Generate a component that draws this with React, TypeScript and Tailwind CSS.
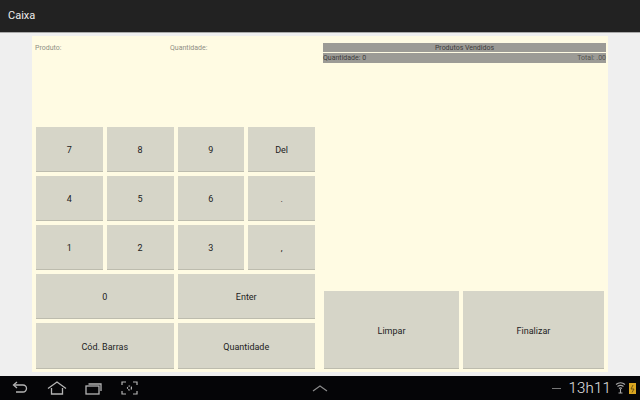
const font = { fontFamily: 'Roboto, sans-serif' };

function Key({ label, className = '' }: { label: string; className?: string }) {
  return (
    <div
      className={`flex items-center justify-center pt-[4px] bg-[#d6d5c8] border-b border-[#bdbcae] text-[9px] text-[#222] ${className}`}
    >
      {label}
    </div>
  );
}

function NavIcons() {
  return (
    <div className="flex items-center gap-[18px] pl-[11px] text-[#b4b4b4]">
      <svg width="18" height="14" viewBox="0 0 18 14" fill="none" stroke="currentColor" strokeWidth="1.3">
        <path d="M6 1 2.500 4 6 7" />
        <path d="M3 4h9a3.500 3.500 0 0 1 0 7H5" />
      </svg>
      <svg width="20" height="14" viewBox="0 0 20 14" fill="none" stroke="currentColor" strokeWidth="1.3">
        <path d="M1 7.500 10 1l9 6.500" />
        <path d="M4.500 7v6h11V7" />
      </svg>
      <svg width="18" height="13" viewBox="0 0 18 13" fill="none" stroke="currentColor" strokeWidth="1.3">
        <rect x="1" y="4" width="13" height="8" />
        <path d="M3.500 2h12.500v7" />
      </svg>
      <svg width="17" height="14" viewBox="0 0 17 14" fill="none" stroke="currentColor" strokeWidth="1.2">
        <path d="M1 4V1h4M12 1h4v3M16 10v3h-4M5 13H1v-3" />
        <circle cx="8.500" cy="7" r="2" strokeDasharray="1.500 1" />
      </svg>
    </div>
  );
}

function StatusIcons() {
  return (
    <div className="flex items-center gap-[3px]">
      <svg width="11" height="12" viewBox="0 0 11 12" fill="none" stroke="#a8a8a8" strokeWidth="1.1">
        <path d="M1 2.500a7 7 0 0 1 9 0M2.500 4.500a5 5 0 0 1 6 0M4 6.500a2.500 2.500 0 0 1 3 0" />
        <path d="M5.500 7v4M3.500 11h4" />
      </svg>
      <svg width="7" height="11" viewBox="0 0 7 11">
        <rect width="7" height="11" fill="#d9a520" />
        <path d="M4 2 2 6h3l-2 3.500" stroke="#5a4510" strokeWidth="0.8" fill="none" />
      </svg>
    </div>
  );
}

export default function App() {
  return (
    <div className="w-[640px] h-[400px] flex flex-col bg-[#efefef] overflow-hidden" style={font}>
      <div className="h-[33px] shrink-0 flex items-center pl-[8px] bg-[#222222] border-b border-[#a9a9a9] text-[11px] text-[#eeeeee]">
        Caixa
      </div>

      <div className="flex-1 min-h-0 pl-[32px] pr-[32px] pt-[3px] pb-[4px]">
        <div className="h-full flex bg-[#fffbe3]">
          <div className="w-[286px] shrink-0 flex flex-col pl-[4px] pt-[8px] pb-[3px]">
            <div className="flex-1 flex -ml-[1px] text-[7px] leading-[8px] text-[#8f8f85]">
              <span className="w-[135px]">Produto:</span>
              <span>Quantidade:</span>
            </div>
            <div className="flex flex-col gap-[4px] w-[279px]">
              <div className="grid grid-cols-4 gap-[4px] h-[45px]">
                <Key label="7" />
                <Key label="8" />
                <Key label="9" />
                <Key label="Del" />
              </div>
              <div className="grid grid-cols-4 gap-[4px] h-[45px]">
                <Key label="4" />
                <Key label="5" />
                <Key label="6" />
                <Key label="." />
              </div>
              <div className="grid grid-cols-4 gap-[4px] h-[45px]">
                <Key label="1" />
                <Key label="2" />
                <Key label="3" />
                <Key label="," />
              </div>
              <div className="grid grid-cols-2 gap-[4px] h-[45px]">
                <Key label="0" />
                <Key label="Enter" />
              </div>
              <div className="grid grid-cols-2 gap-[4px] h-[46px]">
                <Key label="Cód. Barras" />
                <Key label="Quantidade" />
              </div>
            </div>
          </div>

          <div className="flex-1 min-w-0 flex flex-col pl-[5px] pr-[2px] pt-[7px] pb-[3px]">
            <div className="flex-1 text-[7px] leading-[10px] text-[#3c3c3c]">
              <div className="bg-[#9c9b96] text-center h-[9px] mb-px">Produtos Vendidos</div>
              <div className="bg-[#9c9b96] flex justify-between h-[10px]">
                <span>Quantidade: 0</span>
                <span className="text-[#55554f]">Total: .00</span>
              </div>
            </div>
            <div className="flex gap-[4px] h-[78px] pl-[1px] pr-[2px]">
              <Key label="Limpar" className="w-[135px]" />
              <Key label="Finalizar" className="flex-1" />
            </div>
          </div>
        </div>
      </div>

      <div className="h-[24px] shrink-0 flex items-center bg-[#050507] relative">
        <NavIcons />
        <svg className="absolute left-[312px] top-[8px]" width="16" height="8" viewBox="0 0 16 8" fill="none" stroke="#8a8a8a" strokeWidth="1.2">
          <path d="M1 7 8 2l7 5" />
        </svg>
        <div className="ml-auto flex items-center pr-[4px]">
          <span className="w-[9px] h-px bg-[#777] mr-[7px]" />
          <span className="text-[15px] font-light text-[#e8e8e8] mr-[4px] tracking-[0.2px]">13h11</span>
          <StatusIcons />
        </div>
      </div>
    </div>
  );
}
